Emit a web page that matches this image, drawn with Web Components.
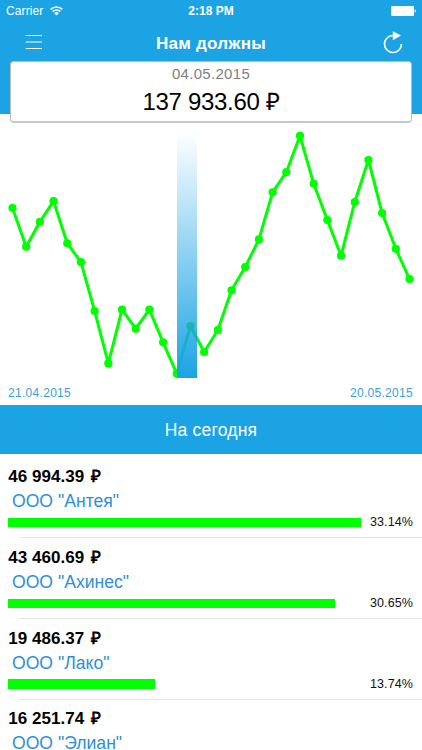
<!DOCTYPE html>
<html lang="ru">
<head>
<meta charset="utf-8">
<title>Нам должны</title>
<style>
	body {
		margin: 0;
		height: 750px;
		overflow: hidden;
		background: #fff;
		font-family: "Liberation Sans", Arial, sans-serif;
		--blue: #1ca3e4;
		--green: #00ff00;
		--link: #2f8fd6;
	}
</style>
</head>
<body>
<debt-app></debt-app>

<script>
class StatusBar extends HTMLElement {
	constructor() {
		super();
		this.attachShadow({ mode: 'open' });
	}

	connectedCallback() {
		this.shadowRoot.innerHTML = `
		<style>
			:host {
				display: grid;
				grid-template-columns: 1fr auto 1fr;
				align-items: center;
				height: 22px;
				padding: 0 3px 0 6px;
				color: #fff;
				font-size: 12px;
				line-height: 22px;
			}
			.left { display: flex; align-items: center; gap: 7px; }
			.carrier { letter-spacing: 0.1px; }
			.time { font-weight: bold; padding-right: 3px; }
			.battery { justify-self: end; }
			svg { display: block; }
		</style>
		<div class="left">
			<span class="carrier">Carrier</span>
			<svg width="13" height="10" viewBox="0 0 13 10" fill="none" stroke="#fff" stroke-width="1.5">
				<path d="M0.6 3.4A8.5 8.5 0 0 1 12.4 3.4M2.7 5.6A5.5 5.5 0 0 1 10.3 5.6"/>
				<path d="M6.5 9.5L4.3 7.2A3.1 3.1 0 0 1 8.7 7.2Z" fill="#fff" stroke="none"/>
			</svg>
		</div>
		<span class="time">2:18 PM</span>
		<svg class="battery" width="28" height="10" viewBox="0 0 28 10" fill="#fff">
			<rect x="0.2" width="22.8" height="10" rx="1"/>
			<path d="M23.7 3.3Q25 3.7 25 5Q25 6.3 23.7 6.7Z"/>
		</svg>
		`;
	}
}
customElements.define('status-bar', StatusBar);

class NavBar extends HTMLElement {
	constructor() {
		super();
		this.attachShadow({ mode: 'open' });
	}

	connectedCallback() {
		this.shadowRoot.innerHTML = `
		<style>
			:host {
				display: grid;
				grid-template-columns: 1fr auto 1fr;
				align-items: center;
				height: 40px;
				padding: 0 18px 0 25px;
				color: #fff;
			}
			h1 {
				margin: 0;
				padding: 3px 7px 0 0;
				font-size: 17px;
				line-height: 20px;
				letter-spacing: 0.25px;
			}
			svg { display: block; }
			.refresh { justify-self: end; }
		</style>
		<svg width="18" height="16" viewBox="0 0 18 16" stroke="#fff" stroke-width="1">
			<path d="M0.7 1.5H17M0.7 8H17M0.7 14.5H17"/>
		</svg>
		<h1><slot></slot></h1>
		<svg class="refresh" width="22" height="24" viewBox="0 0 22 24">
			<path d="M11 5.5A8.5 8.5 0 1 0 19.5 14" fill="none" stroke="#fff" stroke-width="1.7"/>
			<path d="M10.8 1.3L19 5.6L10.8 10.2Z" fill="#fff"/>
		</svg>
		`;
	}
}
customElements.define('nav-bar', NavBar);

class TotalBox extends HTMLElement {
	constructor() {
		super();
		this.attachShadow({ mode: 'open' });
	}

	connectedCallback() {
		this.shadowRoot.innerHTML = `
		<style>
			:host {
				display: block;
				box-sizing: border-box;
				height: 62px;
				margin: -1px 10px 0;
				border: 1px solid #b8bcc0;
				border-bottom: 2px solid #c6c8ca;
				border-radius: 4px;
				background: #fff;
				text-align: center;
			}
			.date {
				padding-top: 3px;
				color: #808080;
				font-size: 15px;
				line-height: 18px;
				letter-spacing: 0.3px;
			}
			.sum {
				padding-top: 4px;
				font-size: 24px;
				line-height: 30px;
				letter-spacing: -0.3px;
			}
		</style>
		<div class="date"><slot name="date"></slot></div>
		<div class="sum"><slot></slot></div>
		`;
	}
}
customElements.define('total-box', TotalBox);

class LineChart extends HTMLElement {
	constructor() {
		super();
		this.attachShadow({ mode: 'open' });
	}

	connectedCallback() {
		const step = 13.69;
		const points = this.getAttribute('values').split(' ')
			.map((y, i) => [12.5 + i * step, Number(y)]);
		this.shadowRoot.innerHTML = `
		<style>
			:host { display: block; height: 282px; }
			svg { display: block; }
			.dates {
				display: flex;
				justify-content: space-between;
				padding: 0 9px 0 8px;
				color: #3d9edb;
				font-size: 12px;
				line-height: 18px;
				letter-spacing: 0.3px;
			}
		</style>
		<svg width="422" height="261" viewBox="0 123 422 261">
			<defs>
				<linearGradient id="fade" x1="0" y1="0" x2="0" y2="1">
					<stop offset="0" stop-color="#1ca3e4" stop-opacity="0"/>
					<stop offset="1" stop-color="#1ca3e4"/>
				</linearGradient>
				<clipPath id="plot"><rect y="123" width="422" height="255"/></clipPath>
			</defs>
			<g clip-path="url(#plot)">
				<polyline points="${points.map(p => p.join()).join(' ')}" fill="none"
					stroke="#00ff00" stroke-width="3" stroke-linejoin="round"/>
				${points.map(([x, y]) => `<circle cx="${x}" cy="${y}" r="4.1" fill="#00ff00"/>`).join('')}
				<rect x="177" y="132" width="20" height="246" fill="url(#fade)"/>
			</g>
		</svg>
		<div class="dates"><span>${this.getAttribute('from')}</span><span>${this.getAttribute('to')}</span></div>
		`;
	}
}
customElements.define('line-chart', LineChart);

class SectionTitle extends HTMLElement {
	constructor() {
		super();
		this.attachShadow({ mode: 'open' });
		this.shadowRoot.innerHTML = `
		<style>
			:host {
				display: block;
				height: 49px;
				background: var(--blue);
				color: #fff;
				font-size: 17.5px;
				line-height: 50px;
				letter-spacing: 0.2px;
				text-align: center;
			}
		</style>
		<slot></slot>
		`;
	}
}
customElements.define('section-title', SectionTitle);

class DebtRow extends HTMLElement {
	constructor() {
		super();
		this.attachShadow({ mode: 'open' });
	}

	connectedCallback() {
		const percent = this.getAttribute('percent');
		this.shadowRoot.innerHTML = `
		<style>
			:host { display: block; height: 80.8px; }
			.sum {
				padding: 12px 0 0 8.3px;
				font-size: 17px;
				font-weight: bold;
				line-height: 22px;
				letter-spacing: 0.05px;
			}
			.currency { margin-left: 2px; }
			.name {
				padding: 1px 0 0 12px;
				color: var(--link);
				font-size: 17.6px;
				line-height: 24px;
			}
			.share {
				display: flex;
				align-items: center;
				justify-content: space-between;
				height: 19px;
				padding: 0 9px 0 8.4px;
				color: #111;
				font-size: 12.5px;
				line-height: 19px;
				letter-spacing: 0.1px;
			}
			.bar { height: 9.5px; background: var(--green); }
			.line {
				height: 1px;
				margin: 5px 0 0 20px;
				background: #e5e5e8;
			}
		</style>
		<div class="sum">${this.getAttribute('sum')} <span class="currency">₽</span></div>
		<div class="name"><slot></slot></div>
		${percent ? `<div class="share">
			<div class="bar" style="width: ${this.getAttribute('width')}px"></div>
			<span>${percent}</span>
		</div>
		<div class="line"></div>` : ''}
		`;
	}
}
customElements.define('debt-row', DebtRow);

class DebtApp extends HTMLElement {
	constructor() {
		super();
		this.attachShadow({ mode: 'open' });
	}

	connectedCallback() {
		this.shadowRoot.innerHTML = `
		<style>
			:host {
				display: block;
				width: 422px;
				height: 750px;
				overflow: hidden;
			}
			header {
				height: 123px;
				background: linear-gradient(var(--blue) 114px, #fff 114px);
			}
		</style>
		<header>
			<status-bar></status-bar>
			<nav-bar>Нам должны</nav-bar>
			<total-box><span slot="date">04.05.2015</span>137 933.60 ₽</total-box>
		</header>
		<line-chart from="21.04.2015" to="20.05.2015"
			values="208 246.7 221.8 201.2 243.3 262.2 311 363.4 309.7 328.7 309.7 342.3 373.7 326 352 330 290.3 267 239.4 192.3 172.2 135.8 183.7 220 255.7 202 160 213 248.8 279"></line-chart>
		<section-title>На сегодня</section-title>
		<debt-row sum="46 994.39" percent="33.14%" width="353">ООО "Антея"</debt-row>
		<debt-row sum="43 460.69" percent="30.65%" width="326.3">ООО "Ахинес"</debt-row>
		<debt-row sum="19 486.37" percent="13.74%" width="146.3">ООО "Лако"</debt-row>
		<debt-row sum="16 251.74">ООО "Элиан"</debt-row>
		`;
	}
}
customElements.define('debt-app', DebtApp);
</script>
</body>
</html>
